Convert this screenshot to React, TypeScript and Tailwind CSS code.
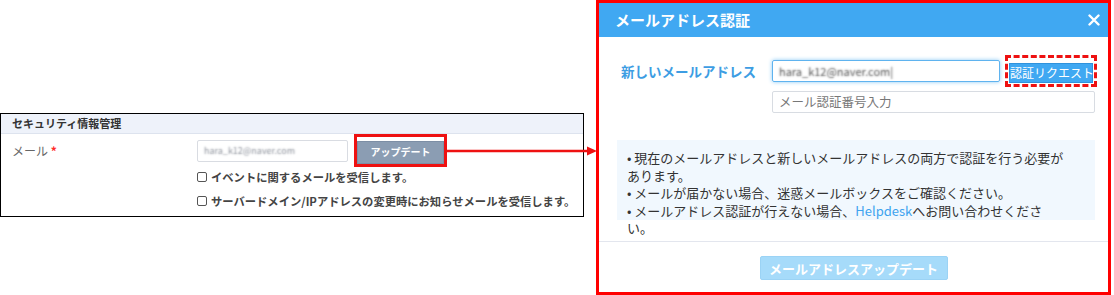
import { FC } from "react";

const jp = "font-['Noto_Sans_CJK_JP','Noto_Sans',sans-serif]";

const SecurityPanel: FC = () => {
  return (
    <div className="w-[584px] border border-black bg-white">
      <div className="h-[20px] flex items-center px-[11px] bg-[#eef2fa] border-b border-[#dde3ee]">
        <span className="text-[11px] font-bold text-[#333] leading-none">
          セキュリティ情報管理
        </span>
      </div>
      <div className="pt-[2px] pb-[3px]">
        <div className="flex items-center h-[29px]">
          <div className="w-[196px] pl-[11px] text-[12px] text-[#666]">
            メール <span className="text-[#ff2a2a] font-bold">*</span>
          </div>
          <div className="w-[151px] h-[22px] border border-[#d9dce2] rounded-[2px] bg-white flex items-center px-[6px] overflow-hidden">
            <span className="text-[9px] text-transparent [text-shadow:0_0_2px_#8a8f99] whitespace-nowrap">
              hara_k12@naver.com
            </span>
          </div>
          <div className="ml-[6px] border-[3px] border-[#ee1111]">
            <button className="w-[87px] h-[23px] bg-[#8b9db3] border border-[#7c8ea5] text-white text-[10px] font-bold leading-none">
              アップデート
            </button>
          </div>
        </div>
        {[
          "イベントに関するメールを受信します。",
          "サーバードメイン/IPアドレスの変更時にお知らせメールを受信します。",
        ].map((t) => (
          <div key={t} className="flex items-center h-[24px] pl-[196px]">
            <span className="w-[10px] h-[10px] border border-[#555] rounded-[2px] bg-white" />
            <span className="ml-[4px] text-[11.3px] font-bold text-[#444] whitespace-nowrap">
              {t}
            </span>
          </div>
        ))}
      </div>
    </div>
  );
};

const EmailModal: FC = () => {
  return (
    <div className="w-[515px] h-[295px] border-[3px] border-[#ff0000] bg-white flex flex-col">
      <div className="h-[34px] shrink-0 bg-[#40a8f2] flex items-center justify-between pl-[16px] pr-[7px]">
        <span className="text-[15px] font-bold text-white">メールアドレス認証</span>
        <svg width="12" height="12" viewBox="0 0 12 12" className="mr-[1px]">
          <path d="M1.5 1.5 L10.5 10.5 M10.5 1.5 L1.5 10.5" stroke="white" strokeWidth="2.4" strokeLinecap="round" />
        </svg>
      </div>
      <div className="flex-1 flex flex-col pl-[18px] pr-[11px]">
        <div className="mt-[20px] flex items-center h-[28px]">
          <div className="w-[155px] pl-[4px] text-[13.5px] font-bold text-[#3d9de3] whitespace-nowrap">
            新しいメールアドレス
          </div>
          <div className="w-[228px] h-[22px] border border-[#5fb3ef] rounded-[2px] shadow-[0_0_4px_#8ccaf5] flex items-center px-[6px] overflow-hidden">
            <span className="text-[11px] text-transparent [text-shadow:0_0_2px_#555] whitespace-nowrap">
              hara_k12@naver.com|
            </span>
          </div>
          <div className="ml-[5px] border-[3px] border-dashed border-[#ee1111] p-[1px]">
            <button className="w-[84px] h-[20px] bg-[#40a8f2] border border-[#2f92dc] text-white text-[12px] leading-none whitespace-nowrap">
              認証リクエスト
            </button>
          </div>
        </div>
        <div className="mt-[6px] ml-[155px] w-[323px] h-[22px] border border-[#d8dce2] rounded-[2px] flex items-center px-[6px]">
          <span className="text-[12.5px] text-[#777]">メール認証番号入力</span>
        </div>
        <div className="mt-[27px] w-[478px] h-[80px] bg-[#f1f8fe] pt-[9px] pl-[10px] text-[13px] leading-[17.5px] text-[#333] whitespace-nowrap">
          •&nbsp;現在のメールアドレスと新しいメールアドレスの両方で認証を行う必要が
          <br />
          あります。
          <br />
          •&nbsp;メールが届かない場合、迷惑メールボックスをご確認ください。
          <br />
          •&nbsp;メールアドレス認証が行えない場合、
          <span className="text-[#3ea3ef]">Helpdesk</span>
          へお問い合わせくださ
          <br />
          い。
        </div>
      </div>
      <div className="h-[51px] shrink-0 border-t border-[#e3e6ee] flex justify-center pt-[14px]">
        <button className="w-[188px] h-[24px] bg-[#a6dbfa] border border-[#9bd3f5] rounded-[2px] text-white text-[13px] font-bold leading-none">
          メールアドレスアップデート
        </button>
      </div>
    </div>
  );
};

const App: FC = () => {
  return (
    <div className={`${jp} relative w-[1114px] h-[295px] bg-white flex overflow-hidden`}>
      <div className="w-[596px] shrink-0 pt-[113px]">
        <SecurityPanel />
      </div>
      <EmailModal />
      {/* annotation arrow */}
      <svg
        className="absolute left-[446px] top-[145px]"
        width="152"
        height="12"
        viewBox="0 0 152 12"
      >
        <line x1="0" y1="6" x2="143" y2="6" stroke="#ee1111" strokeWidth="2.5" />
        <polygon points="141,1.5 151,6 141,10.5" fill="#ee1111" />
      </svg>
    </div>
  );
};

export default App;
